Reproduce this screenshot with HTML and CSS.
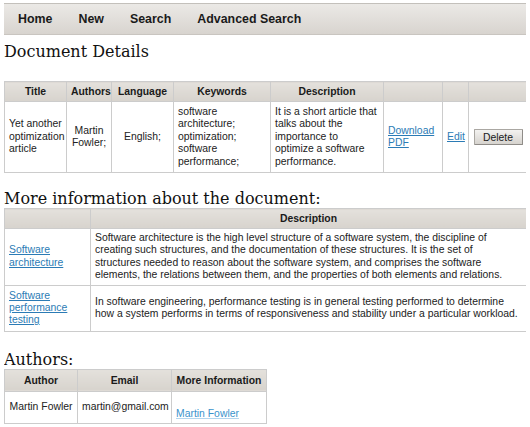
FILE: index.html
```html
<!DOCTYPE html>
<html>
<head>
<meta charset="utf-8">
<link rel="stylesheet" href="styles.css">
</head>
<body>
<nav class="nav">
  <a class="nav-item" href="#">Home</a>
  <a class="nav-item" href="#">New</a>
  <a class="nav-item" href="#">Search</a>
  <a class="nav-item" href="#">Advanced Search</a>
</nav>

<h1 class="title">Document Details</h1>

<table class="grid doc">
  <thead>
    <tr>
      <th class="c-title">Title</th>
      <th class="c-authors">Authors</th>
      <th class="c-lang">Language</th>
      <th class="c-kw">Keywords</th>
      <th class="c-desc">Description</th>
      <th class="c-dl"></th>
      <th class="c-edit"></th>
      <th class="c-del"></th>
    </tr>
  </thead>
  <tbody>
    <tr>
      <td>Yet another optimization article</td>
      <td class="center">Martin Fowler;</td>
      <td class="center">English;</td>
      <td>software architecture; optimization; software performance;</td>
      <td>It is a short article that talks about the importance to optimize a software performance.</td>
      <td><a href="#" class="link">Download PDF</a></td>
      <td><a href="#" class="link">Edit</a></td>
      <td class="center"><button class="btn">Delete</button></td>
    </tr>
  </tbody>
</table>

<h2 class="section">More information about the document:</h2>

<table class="grid info">
  <thead>
    <tr>
      <th class="c-term"></th>
      <th>Description</th>
    </tr>
  </thead>
  <tbody>
    <tr class="r1">
      <td><a href="#" class="link">Software architecture</a></td>
      <td class="desc-long">Software architecture is the high level structure of a software system, the discipline of creating such structures, and the documentation of these structures. It is the set of structures needed to reason about the software system, and comprises the software elements, the relations between them, and the properties of both elements and relations.</td>
    </tr>
    <tr class="r2">
      <td><a href="#" class="link">Software performance testing</a></td>
      <td>In software engineering, performance testing is in general testing performed to determine how a system performs in terms of responsiveness and stability under a particular workload.</td>
    </tr>
  </tbody>
</table>

<h2 class="section authors-h">Authors:</h2>

<table class="grid authors">
  <thead>
    <tr>
      <th class="c-author">Author</th>
      <th class="c-email">Email</th>
      <th class="c-more">More Information</th>
    </tr>
  </thead>
  <tbody>
    <tr>
      <td class="center">Martin Fowler</td>
      <td class="center">martin@gmail.com</td>
      <td class="bottom"><a href="#" class="link soft">Martin Fowler</a></td>
    </tr>
  </tbody>
</table>
</body>
</html>
```

FILE: styles.css
```css
html, body {
  background: #ffffff;
}

body {
  margin: 3px 4px 0 4px;
  font-family: "Liberation Sans", Arial, sans-serif;
  font-size: 10.4px;
  color: #222222;
}

.nav {
  display: flex;
  align-items: center;
  gap: 26px;
  height: 30px;
  padding-left: 15px;
  background: linear-gradient(#ebe9e6, #d8d4cf);
  border-top: 1px solid #c3c0bb;
  border-bottom: 1px solid #c9c5c0;
  margin-left: -1px;
  margin-right: -1px;
}

.nav-item {
  font-weight: bold;
  font-size: 12.4px;
  color: #1a1a1a;
  text-decoration: none;
}

.title,
.section {
  font-family: "DejaVu Serif", "Liberation Serif", serif;
  font-weight: normal;
  font-size: 16px;
  line-height: 19px;
  color: #111111;
  margin: 0;
}

.title {
  margin-top: 7px;
  margin-bottom: 20px;
}

.section {
  margin-top: 16px;
  margin-bottom: 0;
}

.authors-h {
  margin-top: 18px;
}

.grid {
  border-collapse: collapse;
  border: 1px solid #cccccc;
  table-layout: fixed;
}

.grid th {
  background: linear-gradient(#e4e1dc, #d7d3cd);
  font-weight: bold;
  font-size: 10.4px;
  color: #1a1a1a;
  height: 19px;
  padding: 0 4px;
  border: 1px solid #cccccc;
  text-align: center;
}

.grid td {
  border: 1px solid #cccccc;
  padding: 3px 4px;
  vertical-align: middle;
  color: #222222;
  line-height: 12.4px;
}

.center { text-align: center; }

.link {
  color: #2b7bb5;
  text-decoration: underline;
}

.link.soft {
  color: #3a93cc;
  text-decoration-color: #b3d6ee;
}

.doc { width: 523px; }
.doc tbody tr { height: 71px; }
.c-title { width: 53px; }
.c-authors { width: 36px; }
.c-lang { width: 53px; }
.c-kw { width: 88px; }
.c-desc { width: 104px; }
.c-dl { width: 50px; }
.c-edit { width: 17px; }
.c-del { width: 50px; }

.btn {
  font-family: "Liberation Sans", Arial, sans-serif;
  font-size: 10.4px;
  color: #1a1a1a;
  width: 49px;
  height: 16px;
  padding: 0;
  border: 1px solid #aaa7a2;
  border-right-color: #8f8c88;
  border-bottom-color: #8f8c88;
  border-radius: 1px;
  background: linear-gradient(#f3f2f0, #d6d3ce);
}

.info { width: 523px; }
.c-term { width: 77px; }
.info tr.r1 { height: 56px; }
.info tr.r2 { height: 46px; }
.info td.desc-long { padding-right: 9px; }

.authors { width: 262px; }
.authors th { height: 21px; }
.authors tbody tr { height: 32px; }
.c-author { width: 64px; }
.c-email { width: 85px; }
.c-more { width: 86px; }
.authors td.bottom { vertical-align: bottom; padding-bottom: 2px; }
```
